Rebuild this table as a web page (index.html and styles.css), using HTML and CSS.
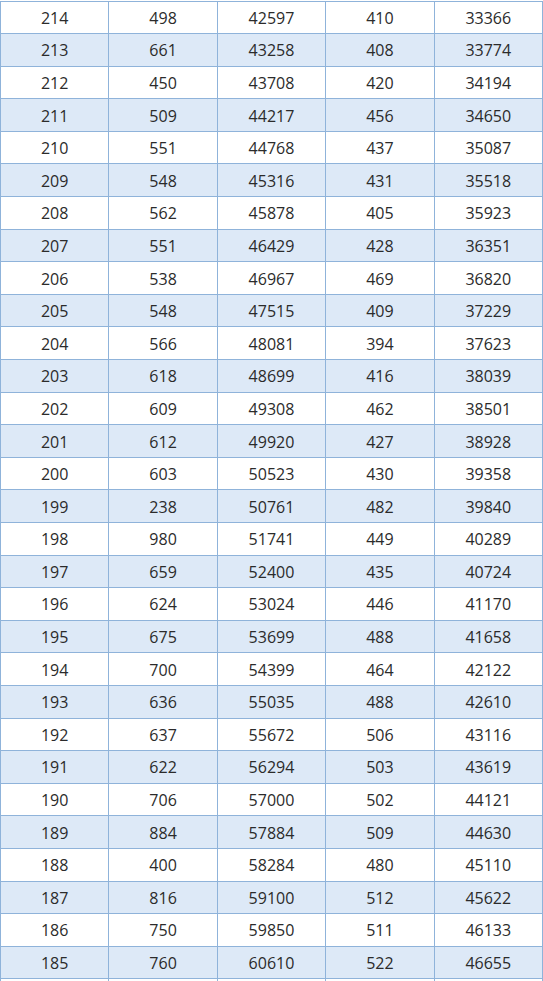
FILE: index.html
```html
<!DOCTYPE html>
<html lang="zh">
<head>
<meta charset="utf-8">
<title>分数段统计表</title>
<link rel="stylesheet" href="styles.css">
</head>
<body>
<table class="score-table">
<tbody>
<tr><td>214</td><td>498</td><td>42597</td><td>410</td><td>33366</td></tr>
<tr><td>213</td><td>661</td><td>43258</td><td>408</td><td>33774</td></tr>
<tr><td>212</td><td>450</td><td>43708</td><td>420</td><td>34194</td></tr>
<tr><td>211</td><td>509</td><td>44217</td><td>456</td><td>34650</td></tr>
<tr><td>210</td><td>551</td><td>44768</td><td>437</td><td>35087</td></tr>
<tr><td>209</td><td>548</td><td>45316</td><td>431</td><td>35518</td></tr>
<tr><td>208</td><td>562</td><td>45878</td><td>405</td><td>35923</td></tr>
<tr><td>207</td><td>551</td><td>46429</td><td>428</td><td>36351</td></tr>
<tr><td>206</td><td>538</td><td>46967</td><td>469</td><td>36820</td></tr>
<tr><td>205</td><td>548</td><td>47515</td><td>409</td><td>37229</td></tr>
<tr><td>204</td><td>566</td><td>48081</td><td>394</td><td>37623</td></tr>
<tr><td>203</td><td>618</td><td>48699</td><td>416</td><td>38039</td></tr>
<tr><td>202</td><td>609</td><td>49308</td><td>462</td><td>38501</td></tr>
<tr><td>201</td><td>612</td><td>49920</td><td>427</td><td>38928</td></tr>
<tr><td>200</td><td>603</td><td>50523</td><td>430</td><td>39358</td></tr>
<tr><td>199</td><td>238</td><td>50761</td><td>482</td><td>39840</td></tr>
<tr><td>198</td><td>980</td><td>51741</td><td>449</td><td>40289</td></tr>
<tr><td>197</td><td>659</td><td>52400</td><td>435</td><td>40724</td></tr>
<tr><td>196</td><td>624</td><td>53024</td><td>446</td><td>41170</td></tr>
<tr><td>195</td><td>675</td><td>53699</td><td>488</td><td>41658</td></tr>
<tr><td>194</td><td>700</td><td>54399</td><td>464</td><td>42122</td></tr>
<tr><td>193</td><td>636</td><td>55035</td><td>488</td><td>42610</td></tr>
<tr><td>192</td><td>637</td><td>55672</td><td>506</td><td>43116</td></tr>
<tr><td>191</td><td>622</td><td>56294</td><td>503</td><td>43619</td></tr>
<tr><td>190</td><td>706</td><td>57000</td><td>502</td><td>44121</td></tr>
<tr><td>189</td><td>884</td><td>57884</td><td>509</td><td>44630</td></tr>
<tr><td>188</td><td>400</td><td>58284</td><td>480</td><td>45110</td></tr>
<tr><td>187</td><td>816</td><td>59100</td><td>512</td><td>45622</td></tr>
<tr><td>186</td><td>750</td><td>59850</td><td>511</td><td>46133</td></tr>
<tr><td>185</td><td>760</td><td>60610</td><td>522</td><td>46655</td></tr>
<tr class="cut"><td></td><td></td><td></td><td></td><td></td></tr>
</tbody>
</table>
</body>
</html>
```

FILE: styles.css
```css
html, body {
  margin: 0;
  padding: 0;
  background: #ffffff;
  overflow: hidden;
  height: 981px;
}

body {
  padding-top: 0.5px;
}

.score-table {
  border-collapse: collapse;
  width: 543px;
  table-layout: fixed;
  font-family: "Open Sans", "Noto Sans CJK SC", sans-serif;
  font-size: 16px;
  color: #2b2b2b;
}

.score-table td {
  border: 1px solid #8fb3da;
  height: 32.6px;
  padding: 1px 0 0;
  text-align: center;
  vertical-align: middle;
  box-sizing: border-box;
}

.score-table tr:nth-child(even) td {
  background: #dde9f7;
}
```
